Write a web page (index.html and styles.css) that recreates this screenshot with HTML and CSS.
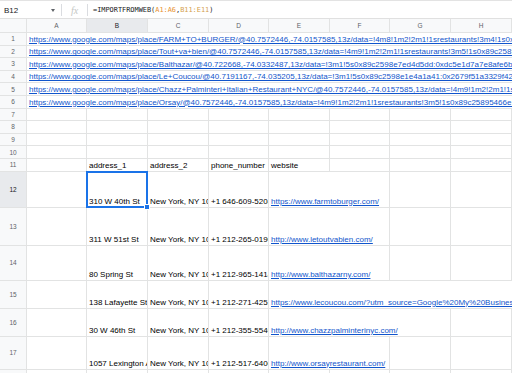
FILE: index.html
```html
<!DOCTYPE html>
<html lang="en">

<head>
  <meta charset="UTF-8">
  <title>IMPORTFROMWEB</title>
  <link rel="stylesheet" href="styles.css">
</head>

<body>
  <div class="formula-bar">
    <div class="name-box">B12 <span class="caret"></span></div>
    <div class="sep"></div>
    <div class="fx">fx</div>
    <div class="sep"></div>
    <div class="formula">=IMPORTFROMWEB(<span class="ref1">A1:A6</span>,<span class="ref2">B11:E11</span>)</div>
  </div>

  <div class="sheet">
    <!-- column headers -->
    <div class="row">
      <div class="h corner"></div>
      <div class="h">A</div>
      <div class="h on">B</div>
      <div class="h">C</div>
      <div class="h">D</div>
      <div class="h">E</div>
      <div class="h">F</div>
      <div class="h">G</div>
      <div class="h">H</div>
      <div class="h"></div>
    </div>

    <!-- urls, overflow across the row -->
    <div class="row">
      <div class="h">1</div>
      <div class="c span9"><a href="#">https://www.google.com/maps/place/FARM+TO+BURGER/@40.7572446,-74.0157585,13z/data=!4m8!1m2!2m1!1srestaurants!3m4!1s0x89c2585f7e5d0c3b:0x1d2a8f7c4e0e6b2a</a></div>
    </div>
    <div class="row">
      <div class="h">2</div>
      <div class="c span9"><a href="#">https://www.google.com/maps/place/Tout+va+bien/@40.7572446,-74.0157585,13z/data=!4m9!1m2!2m1!1srestaurants!3m5!1s0x89c25895466e1a3b</a></div>
    </div>
    <div class="row">
      <div class="h">3</div>
      <div class="c span9"><a href="#">https://www.google.com/maps/place/Balthazar/@40.722668,-74.0332487,13z/data=!3m1!5s0x89c2598e7ed4d5dd:0xdc5e1d7a7e8afe6b!4m8</a></div>
    </div>
    <div class="row">
      <div class="h">4</div>
      <div class="c span9"><a href="#">https://www.google.com/maps/place/Le+Coucou/@40.7191167,-74.035205,13z/data=!3m1!5s0x89c2598e1e4a1a41:0x2679f51a3329f42b!4m8</a></div>
    </div>
    <div class="row">
      <div class="h">5</div>
      <div class="c span9"><a href="#">https://www.google.com/maps/place/Chazz+Palminteri+Italian+Restaurant+NYC/@40.7572446,-74.0157585,13z/data=!4m9!1m2!2m1!1s</a></div>
    </div>
    <div class="row">
      <div class="h">6</div>
      <div class="c span9"><a href="#">https://www.google.com/maps/place/Orsay/@40.7572446,-74.0157585,13z/data=!4m9!1m2!2m1!1srestaurants!3m5!1s0x89c25895466e1a3b</a></div>
    </div>

    <!-- empty rows -->
    <div class="row">
      <div class="h">7</div>
      <div class="c"></div><div class="c"></div><div class="c"></div><div class="c"></div><div class="c"></div><div class="c"></div><div class="c"></div><div class="c"></div><div class="c"></div>
    </div>
    <div class="row">
      <div class="h">8</div>
      <div class="c"></div><div class="c"></div><div class="c"></div><div class="c"></div><div class="c"></div><div class="c"></div><div class="c"></div><div class="c"></div><div class="c"></div>
    </div>
    <div class="row">
      <div class="h">9</div>
      <div class="c"></div><div class="c"></div><div class="c"></div><div class="c"></div><div class="c"></div><div class="c"></div><div class="c"></div><div class="c"></div><div class="c"></div>
    </div>
    <div class="row">
      <div class="h">10</div>
      <div class="c"></div><div class="c"></div><div class="c"></div><div class="c"></div><div class="c"></div><div class="c"></div><div class="c"></div><div class="c"></div><div class="c"></div>
    </div>

    <!-- result headings -->
    <div class="row">
      <div class="h">11</div>
      <div class="c"></div>
      <div class="c">address_1</div>
      <div class="c">address_2</div>
      <div class="c">phone_number</div>
      <div class="c">website</div>
      <div class="c"></div><div class="c"></div><div class="c"></div><div class="c"></div>
    </div>

    <!-- results -->
    <div class="row">
      <div class="h on">12</div>
      <div class="c"></div>
      <div class="c sel">310 W 40th St</div>
      <div class="c">New York, NY 10018</div>
      <div class="c">+1 646-609-5208</div>
      <div class="c span2"><a href="#">https://www.farmtoburger.com/</a></div>
      <div class="c"></div><div class="c"></div><div class="c"></div>
    </div>
    <div class="row">
      <div class="h">13</div>
      <div class="c"></div>
      <div class="c">311 W 51st St</div>
      <div class="c">New York, NY 10019</div>
      <div class="c">+1 212-265-0190</div>
      <div class="c span2"><a href="#">http://www.letoutvabien.com/</a></div>
      <div class="c"></div><div class="c"></div><div class="c"></div>
    </div>
    <div class="row">
      <div class="h">14</div>
      <div class="c"></div>
      <div class="c">80 Spring St</div>
      <div class="c">New York, NY 10012</div>
      <div class="c">+1 212-965-1414</div>
      <div class="c span2"><a href="#">http://www.balthazarny.com/</a></div>
      <div class="c"></div><div class="c"></div><div class="c"></div>
    </div>
    <div class="row">
      <div class="h">15</div>
      <div class="c"></div>
      <div class="c">138 Lafayette St</div>
      <div class="c">New York, NY 10013</div>
      <div class="c">+1 212-271-4252</div>
      <div class="c span5"><a href="#">https://www.lecoucou.com/?utm_source=Google%20My%20Business&amp;utm_medium=organic</a></div>
    </div>
    <div class="row">
      <div class="h">16</div>
      <div class="c"></div>
      <div class="c">30 W 46th St</div>
      <div class="c">New York, NY 10036</div>
      <div class="c">+1 212-355-5540</div>
      <div class="c span3"><a href="#">http://www.chazzpalminterinyc.com/</a></div>
      <div class="c"></div><div class="c"></div>
    </div>
    <div class="row">
      <div class="h">17</div>
      <div class="c"></div>
      <div class="c">1057 Lexington Ave</div>
      <div class="c">New York, NY 10021</div>
      <div class="c">+1 212-517-6400</div>
      <div class="c span2"><a href="#">http://www.orsayrestaurant.com/</a></div>
      <div class="c"></div><div class="c"></div><div class="c"></div>
    </div>
    <div class="row">
      <div class="h">18</div>
      <div class="c"></div><div class="c"></div><div class="c"></div><div class="c"></div><div class="c"></div><div class="c"></div><div class="c"></div><div class="c"></div><div class="c"></div>
    </div>
  </div>
</body>

</html>
```

FILE: styles.css
```css
body {
  margin: 0;
  width: 512px;
  height: 373px;
  overflow: hidden;
  background-color: #ffffff;
  font-family: "Liberation Sans", Arial, sans-serif;
  color: #000000;
}

/* formula bar */
.formula-bar {
  display: flex;
  align-items: center;
  height: 16px;
  padding-top: 1px;
  border-top: 1px solid #e3e3e3;
  border-bottom: 1px solid #e0e0e0;
}

.name-box {
  width: 61px;
  box-sizing: border-box;
  display: flex;
  align-items: center;
  justify-content: space-between;
  padding: 0 6px 0 4px;
  font-size: 8px;
  color: #202124;
}

.caret {
  width: 0;
  height: 0;
  border-left: 2.5px solid transparent;
  border-right: 2.5px solid transparent;
  border-top: 3px solid #5f6368;
}

.sep {
  width: 1px;
  height: 12px;
  background-color: #dadce0;
}

.fx {
  width: 25px;
  text-align: center;
  font-family: "Liberation Serif", serif;
  font-style: italic;
  font-size: 10px;
  color: #c4c7c5;
}

.formula {
  padding-left: 5px;
  font-family: "DejaVu Sans Mono", monospace;
  font-size: 6.9px;
  color: #202124;
}

.ref1 {
  color: #e8912d;
}

.ref2 {
  color: #d4a04c;
}

/* grid */
.sheet {
  display: grid;
  grid-template-columns: 26px 59px 60px 60px 59px 60px 59px 60px 60px 30px;
  grid-template-rows: 13px repeat(11, 11.6px) 35px 37px 34px 27px 27px 32px 30px;
  gap: 1px;
  background-color: #e2e3e3;
}

.row {
  display: contents;
}

.h {
  display: flex;
  align-items: center;
  justify-content: center;
  background-color: #f8f9fa;
  color: #5f6368;
  font-size: 6.5px;
}

.h.on {
  background-color: #e8eaed;
  color: #202124;
}

.c {
  display: flex;
  align-items: flex-end;
  min-width: 0;
  padding: 0 2px 1px;
  background-color: #ffffff;
  font-size: 8px;
  line-height: 9px;
  white-space: nowrap;
  overflow: hidden;
}

.span2 {
  grid-column: span 2;
}

.span3 {
  grid-column: span 3;
}

.span5 {
  grid-column: span 5;
}

.span9 {
  grid-column: span 9;
}

.c a {
  color: #1155cc;
  text-decoration: underline;
}

/* selected cell */
.sel {
  position: relative;
  overflow: visible;
}

.sel::after {
  content: "";
  position: absolute;
  top: -1px;
  left: -1px;
  right: -1px;
  bottom: -1px;
  border: 2px solid #1a73e8;
}

.sel::before {
  content: "";
  position: absolute;
  right: -3px;
  bottom: -3px;
  width: 4px;
  height: 4px;
  background-color: #1a73e8;
  border: 1px solid #ffffff;
  z-index: 1;
}
```
